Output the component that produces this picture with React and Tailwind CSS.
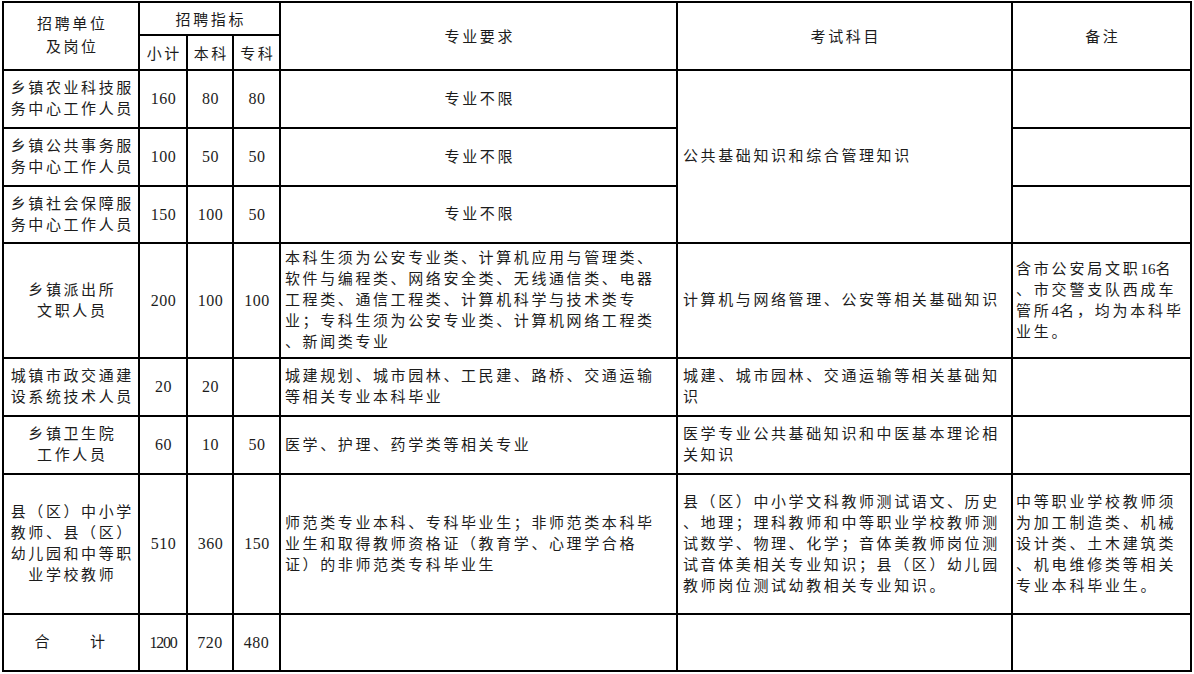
const rows = [
  {
    unit: ['乡镇农业科技服', '务中心工作人员'],
    nums: ['160', '80', '80'],
    major: ['专业不限'],
    majorCenter: true,
  },
  {
    unit: ['乡镇公共事务服', '务中心工作人员'],
    nums: ['100', '50', '50'],
    major: ['专业不限'],
    majorCenter: true,
  },
  {
    unit: ['乡镇社会保障服', '务中心工作人员'],
    nums: ['150', '100', '50'],
    major: ['专业不限'],
    majorCenter: true,
  },
  {
    unit: ['乡镇派出所', '文职人员'],
    nums: ['200', '100', '100'],
    major: [
      '本科生须为公安专业类、计算机应用与管理类、',
      '软件与编程类、网络安全类、无线通信类、电器',
      '工程类、通信工程类、计算机科学与技术类专',
      '业；专科生须为公安专业类、计算机网络工程类',
      '、新闻类专业',
    ],
    exam: ['计算机与网络管理、公安等相关基础知识'],
    note: [
      <>含市公安局文职<span className="tracking-normal">16</span>名</>,
      '、市交警支队西成车',
      <>管所<span className="tracking-normal">4</span>名，均为本科毕</>,
      '业生。',
    ],
  },
  {
    unit: ['城镇市政交通建', '设系统技术人员'],
    nums: ['20', '20', ''],
    major: ['城建规划、城市园林、工民建、路桥、交通运输', '等相关专业本科毕业'],
    exam: ['城建、城市园林、交通运输等相关基础知', '识'],
  },
  {
    unit: ['乡镇卫生院', '工作人员'],
    nums: ['60', '10', '50'],
    major: ['医学、护理、药学类等相关专业'],
    exam: ['医学专业公共基础知识和中医基本理论相', '关知识'],
  },
  {
    unit: ['县（区）中小学', '教师、县（区）', '幼儿园和中等职', '业学校教师'],
    nums: ['510', '360', '150'],
    major: [
      '师范类专业本科、专科毕业生；非师范类本科毕',
      '业生和取得教师资格证（教育学、心理学合格',
      '证）的非师范类专科毕业生',
    ],
    exam: [
      '县（区）中小学文科教师测试语文、历史',
      '、地理；理科教师和中等职业学校教师测',
      '试数学、物理、化学；音体美教师岗位测',
      '试音体美相关专业知识；县（区）幼儿园',
      '教师岗位测试幼教相关专业知识。',
    ],
    note: ['中等职业学校教师须', '为加工制造类、机械', '设计类、土木建筑类', '、机电维修类等相关', '专业本科毕业生。'],
  },
]

function Cell({ className = '', children }) {
  return <div className={`bg-white flex items-center ${className}`}>{children}</div>
}

function Lines({ lines, className = '' }) {
  return (
    <div className={`whitespace-nowrap leading-[21px] ${className}`}>
      {lines.map((l, i) => (
        <div key={i}>{l}</div>
      ))}
    </div>
  )
}

export default function App() {
  return (
    <div className="bg-white min-h-screen pt-[1px] pl-[2px] font-['Liberation_Serif','Noto_Sans_CJK_SC',serif] text-[15px] tracking-[2.6px] text-[#1c1c1c]">
      <div className="grid w-fit bg-black p-[2px] gap-[2px] grid-cols-[134px_46px_44px_45px_395px_333px_177px] grid-rows-[31px_33px_56px_56px_55px_113px_56px_56px_138px_55px]">
        {/* header */}
        <Cell className="row-span-2 justify-center text-center pl-[2.6px]">
          <div className="leading-[23px]">
            <div>招聘单位</div>
            <div>及岗位</div>
          </div>
        </Cell>
        <Cell className="col-span-3 justify-center pl-[2.6px] pt-[3px]">招聘指标</Cell>
        <Cell className="row-span-2 justify-center pl-[2.6px] pt-[2px]">专业要求</Cell>
        <Cell className="row-span-2 justify-center pl-[2.6px] pt-[2px]">考试科目</Cell>
        <Cell className="row-span-2 justify-center pl-[2.6px] pt-[2px]">备注</Cell>
        <Cell className="justify-center pl-[2.6px] pt-[4px]">小计</Cell>
        <Cell className="justify-center pl-[2.6px] pt-[4px]">本科</Cell>
        <Cell className="justify-center pl-[2.6px] pt-[4px]">专科</Cell>

        {rows.map((r, i) => (
          <Row key={i} r={r} first={i === 0} />
        ))}

        {/* total */}
        <Cell className="justify-center gap-[38px]">
          <span>合</span>
          <span>计</span>
        </Cell>
        <Cell className="justify-center text-[16px] tracking-[-1.2px]">1200</Cell>
        <Cell className="justify-center text-[16px] tracking-[0.5px]">720</Cell>
        <Cell className="justify-center text-[16px] tracking-[0.5px]">480</Cell>
        <Cell />
        <Cell />
        <Cell />
      </div>
    </div>
  )
}

function Row({ r, first }) {
  return (
    <>
      <Cell className="justify-center text-center pl-[2.6px]">
        <Lines lines={r.unit} />
      </Cell>
      {r.nums.map((n, j) => (
        <Cell key={j} className="justify-center text-[16px] tracking-[0.5px] pl-[1px]">
          {n}
        </Cell>
      ))}
      <Cell className={r.majorCenter ? 'justify-center pl-[2.6px]' : 'pl-[4px]'}>
        <Lines lines={r.major} />
      </Cell>
      {first && (
        <Cell className="row-span-3 pl-[5px]">
          <Lines lines={['公共基础知识和综合管理知识']} />
        </Cell>
      )}
      {r.exam && (
        <Cell className="pl-[5px]">
          <Lines lines={r.exam} />
        </Cell>
      )}
      <Cell className="pl-[3px]">{r.note && <Lines lines={r.note} className="tracking-[2.8px]" />}</Cell>
    </>
  )
}
